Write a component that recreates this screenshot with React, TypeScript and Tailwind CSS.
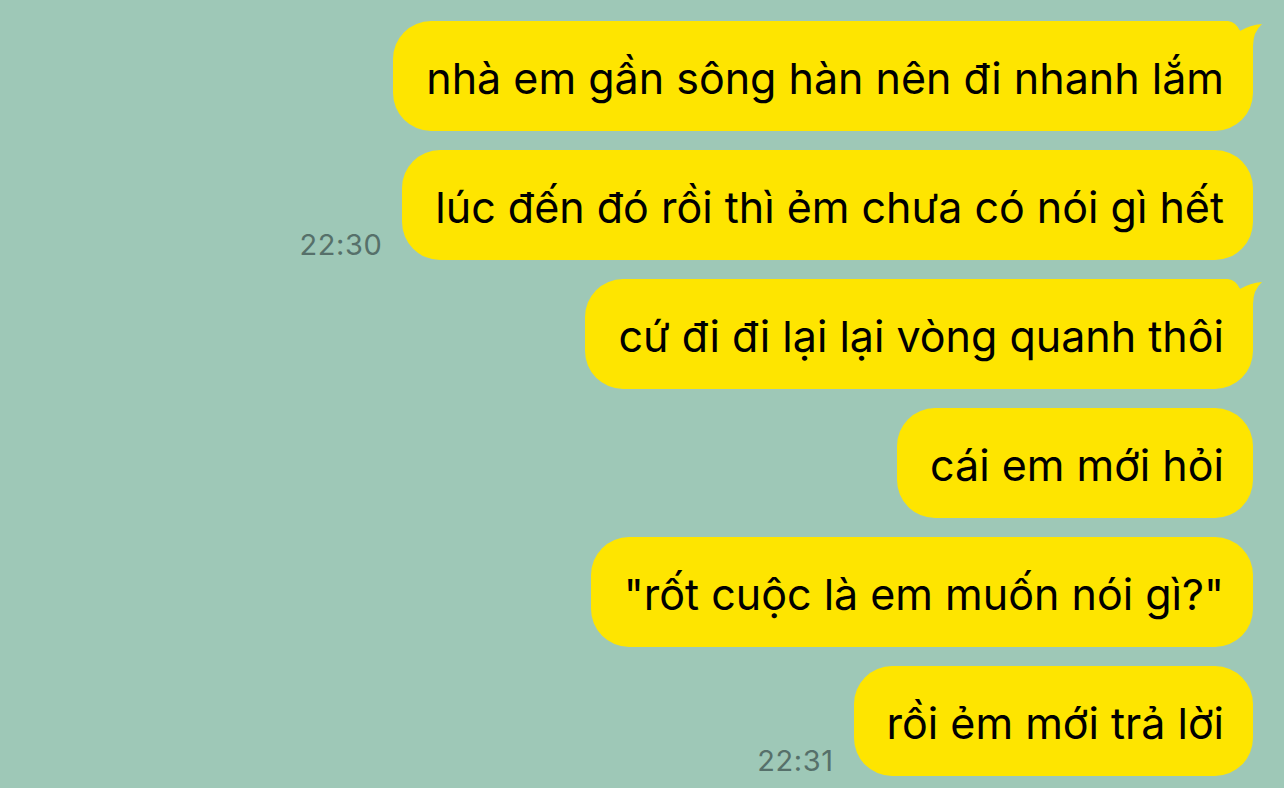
import React from "react";

const msgs: { text: string; tail?: boolean; time?: string }[] = [
  { text: "nhà em gần sông hàn nên đi nhanh lắm", tail: true },
  { text: "lúc đến đó rồi thì ẻm chưa có nói gì hết", time: "22:30" },
  { text: "cứ đi đi lại lại vòng quanh thôi", tail: true },
  { text: "cái em mới hỏi" },
  { text: "\"rốt cuộc là em muốn nói gì?\"" },
  { text: "rồi ẻm mới trả lời", time: "22:31" },
];

function Tail() {
  return (
    <svg
      className="absolute top-0 right-[-10px]"
      width="50"
      height="40"
      viewBox="0 0 50 40"
    >
      <path
        d="M0,0 L15,0 Q23,1 27,10 Q37,4 49,3 Q40,11 40,25 L40,40 L0,40 Z"
        fill="#fee500"
      />
    </svg>
  );
}

export default function App() {
  return (
    <div
      className="w-[1284px] h-[788px] overflow-hidden bg-[#9ec8b7] flex flex-col items-end pt-[21px] pr-[31px] gap-[19px]"
      style={{ fontFamily: "Inter, 'Noto Sans', sans-serif" }}
    >
      {msgs.map((m, i) => (
        <div key={i} className="flex items-end gap-[20px]">
          {m.time && (
            <span className="text-[29px] leading-none text-[#56706a] mb-[1px] tracking-[0.6px]">
              {m.time}
            </span>
          )}
          <div className="relative h-[110px] rounded-[38px] bg-[#fee500] flex items-center pl-[33px] pr-[29px]">
            {m.tail && <Tail />}
            <span className="relative text-[43px] leading-none text-black whitespace-nowrap pt-[4px]">
              {m.text}
            </span>
          </div>
        </div>
      ))}
    </div>
  );
}
